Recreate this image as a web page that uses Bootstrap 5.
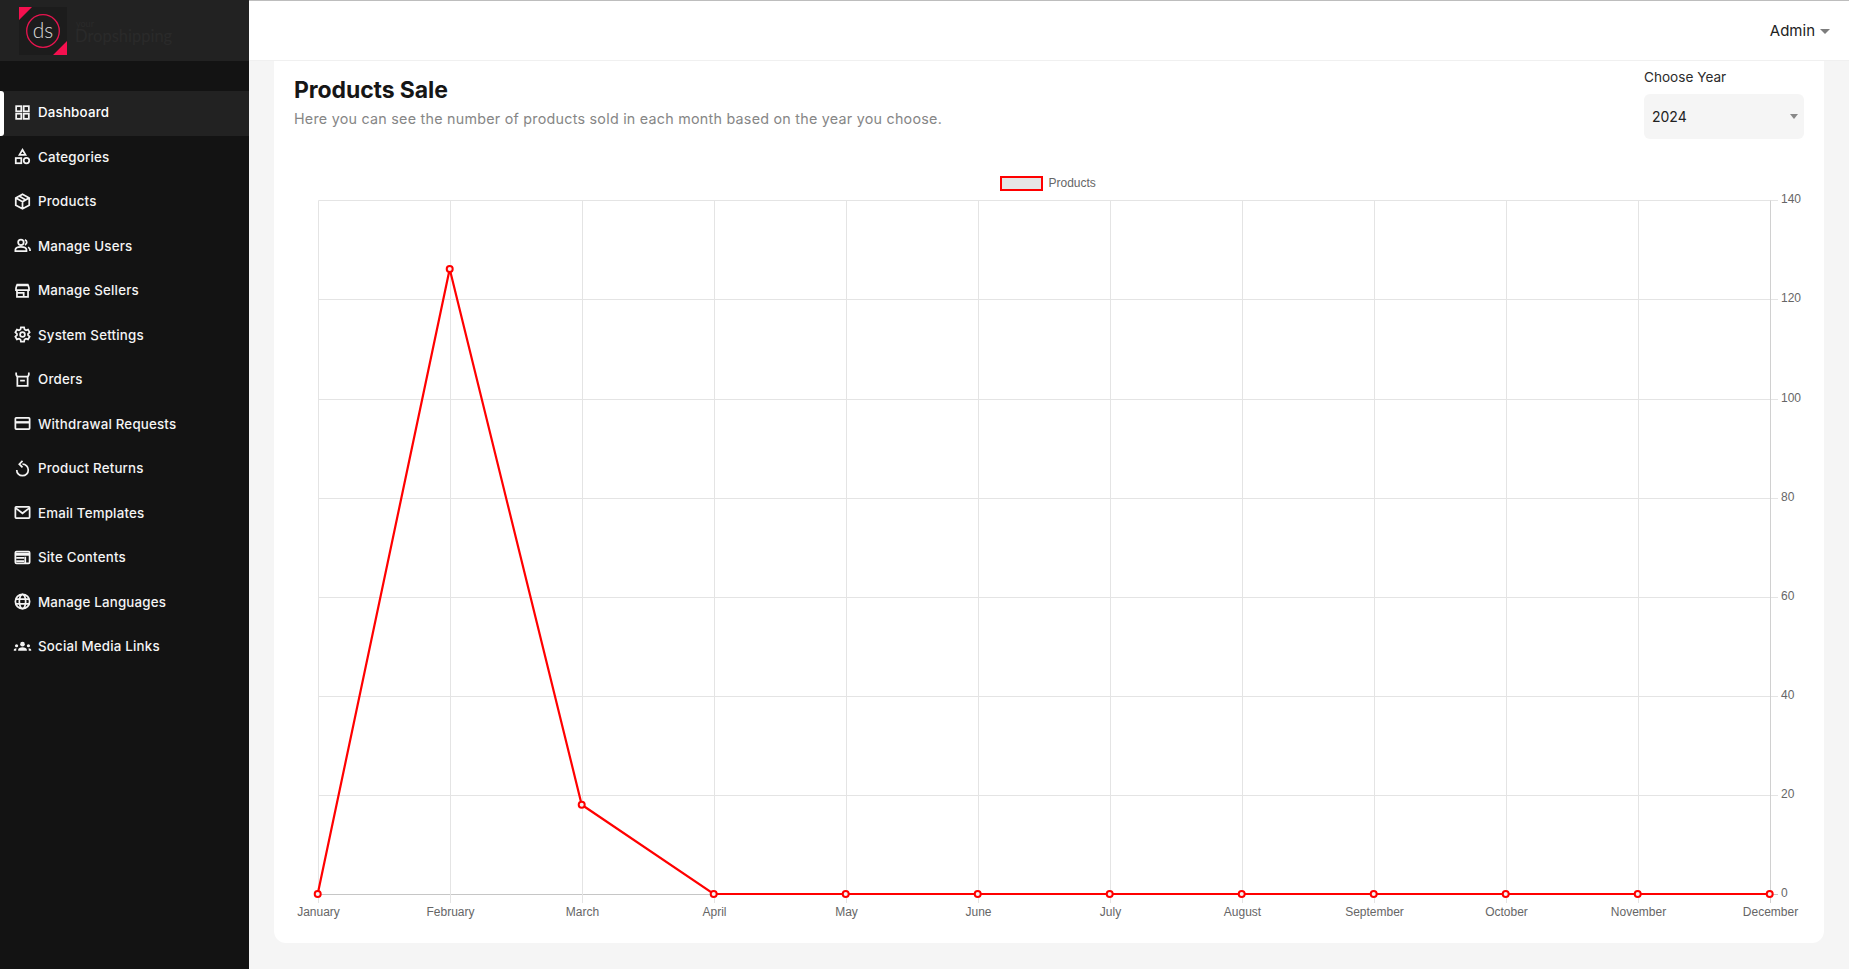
<!DOCTYPE html>
<html lang="en">
<head>
<meta charset="utf-8">
<title>Products Sale</title>
<link href="https://cdn.jsdelivr.net/npm/bootstrap@5.3.0/dist/css/bootstrap.min.css" rel="stylesheet">
<style>
html,body{height:100%;overflow:hidden}
body{font-family:"Inter","Noto Sans",sans-serif;background:#f5f5f5;color:#222}
.side-panel{width:249px;background:#131313;flex:none}
.side-brand{height:61px;background:#222;padding:7px 0 0 19px}
.side-brand svg{display:block}
.side-nav{padding-top:30px}
.side-link{height:44.5px;padding:0 0 0 13px;color:#f5f5f5;font-size:13.3px;font-weight:500;letter-spacing:.2px;display:flex;align-items:center;gap:6px;position:relative}
.side-link:hover,.side-link:focus{color:#fff}
.side-link svg{width:19px;height:19px;flex:none;fill:none;stroke:#f4f4f4;stroke-width:2.2;margin-top:-2px}
.side-link.is-on{background:#222;color:#fff}
.side-link.is-on::before{content:"";position:absolute;left:0;top:0;bottom:0;width:4px;background:#fff;border-radius:0 3px 3px 0}
.top-strip{height:61px;background:#fff;border-top:1px solid #bdbdbd;border-bottom:1px solid #f0f0f0;padding:2px 19px 0 0;flex:none}
.admin-link{font-size:15px;color:#222;text-decoration:none;padding:0;border:0;background:none}
.admin-link::after{content:"";display:inline-block;margin-left:5px;vertical-align:2px;border-left:5px solid transparent;border-right:5px solid transparent;border-top:5.5px solid #7d7d7d}
.main-pane{padding:0 25px 26px}
.sale-panel{background:#fff;border-radius:0 0 12px 12px}
.panel-head{height:84px;padding:0 20px}
.sale-title{font-size:23px;font-weight:700;color:#161616;margin:15px 0 0;line-height:28px;letter-spacing:-.1px}
.sale-sub{font-size:14.3px;color:#868686;margin:5px 0 0;line-height:20px;letter-spacing:.25px}
.year-box{width:160px;padding-top:6px}
.year-label{font-size:13.6px;color:#2b2b2b;line-height:20px;margin:0 0 7px;display:block}
.year-select{height:45px;background-color:#f5f5f5;border:0;border-radius:6px;padding:0 8px;font-size:14px;color:#222;background-size:8px 5px;background-position:right 6px center;background-image:url("data:image/svg+xml,%3csvg xmlns='http://www.w3.org/2000/svg' viewBox='0 0 8 5'%3e%3cpath fill='%23888' d='M0 0h8L4 5z'/%3e%3c/svg%3e")}
.chart-canvas{display:block;width:1550px;height:798px}
.chart-canvas text{font-family:"Liberation Sans",Arial,sans-serif;font-size:12px;fill:#666}
</style>
</head>
<body>
<div class="d-flex vh-100">
  <aside class="side-panel d-flex flex-column">
    <div class="side-brand">
      <svg width="170" height="48" viewBox="0 0 170 48">
        <rect width="48" height="48" fill="#1c1c1c"/>
        <path d="M0 0h13L0 13zM48 48H34L48 34z" fill="#f5104f"/>
        <circle cx="24" cy="24" r="16.3" fill="none" stroke="#e8144f" stroke-width="1.3"/>
        <text x="24" y="30.5" text-anchor="middle" font-family="Lato,sans-serif" font-weight="300" font-size="21" fill="#d8d8d8">ds</text>
        <text x="57" y="20" font-family="Lato,sans-serif" font-size="9" fill="#2a2a2a">your</text>
        <text x="56" y="35" font-family="Lato,sans-serif" font-size="16.5" fill="#2a2a2a">Dropshipping</text>
      </svg>
    </div>
    <nav class="nav flex-column side-nav">
      <a class="nav-link side-link is-on" href="#"><svg viewBox="0 0 24 24"><rect x="4" y="4" width="6.5" height="6.5"/><rect x="13.5" y="4" width="6.5" height="6.5"/><rect x="4" y="13.5" width="6.5" height="6.5"/><rect x="13.5" y="13.5" width="6.5" height="6.5"/></svg>Dashboard</a>
      <a class="nav-link side-link" href="#"><svg viewBox="0 0 24 24"><path d="M12 3.500l3.800 6.500H8.200z"/><rect x="3.500" y="14" width="7" height="6.500"/><circle cx="17" cy="17.200" r="3.500"/></svg>Categories</a>
      <a class="nav-link side-link" href="#"><svg viewBox="0 0 24 24"><path d="M12 2.800l8.500 4.800v9L12 21.200l-8.500-4.600v-9zM3.800 7.600l8.200 4.600 8.200-4.600M12 12.200v9M7.800 5.200l8.300 4.800"/></svg>Products</a>
      <a class="nav-link side-link" href="#"><svg viewBox="0 0 24 24"><circle cx="10" cy="8" r="3.500"/><path d="M3 19v-1.500C3 15 6 13.800 10 13.800s7 1.200 7 3.700V19zM15 4.700a3.500 3.500 0 0 1 0 6.600M19 14.200c1.500.7 2.500 1.800 2.500 3.300V19"/></svg>Manage Users</a>
      <a class="nav-link side-link" href="#"><svg viewBox="0 0 24 24"><path d="M4.500 4.500h15M3.800 9l1-3.500h14.400l1 3.500v2.500H3.800zM5 11.500V20h14v-8.500M5 15h8.500v5"/></svg>Manage Sellers</a>
      <a class="nav-link side-link" href="#"><svg viewBox="0 0 24 24"><circle cx="12" cy="12" r="3"/><path d="M10 3h4l.6 2.700 1.800 1 2.600-.9 2 3.400-2 1.900v1.800l2 1.900-2 3.400-2.600-.9-1.800 1-.6 2.700h-4l-.6-2.700-1.800-1-2.600.9-2-3.400 2-1.900v-1.800l-2-1.900 2-3.400 2.600.9 1.800-1z"/></svg>System Settings</a>
      <a class="nav-link side-link" href="#"><svg viewBox="0 0 24 24"><path d="M4 3v3l1.500 3v11h13V9L20 6V3M5.500 8.500h13M9 13.500h6"/></svg>Orders</a>
      <a class="nav-link side-link" href="#"><svg viewBox="0 0 24 24"><rect x="3" y="5" width="18" height="14" rx="1"/><path d="M3 10.500h18" stroke-width="3"/></svg>Withdrawal Requests</a>
      <a class="nav-link side-link" href="#"><svg viewBox="0 0 24 24"><path d="M12 6.500a7.300 7.300 0 1 1-7.300 7.300M12 2.500l-4 4 4 4"/></svg>Product Returns</a>
      <a class="nav-link side-link" href="#"><svg viewBox="0 0 24 24"><rect x="3" y="5" width="18" height="14" rx="1"/><path d="M3.500 6.500L12 13l8.500-6.500"/></svg>Email Templates</a>
      <a class="nav-link side-link" href="#"><svg viewBox="0 0 24 24"><rect x="3" y="4.500" width="18" height="15" rx="1.500"/><path d="M3 8h18" stroke-width="3.500"/><path d="M4 12.500h10M4 16.500h10M15.500 11v8"/></svg>Site Contents</a>
      <a class="nav-link side-link" href="#"><svg viewBox="0 0 24 24"><circle cx="12" cy="12" r="9"/><ellipse cx="12" cy="12" rx="4" ry="9"/><path d="M3.500 9h17M3.500 15h17"/></svg>Manage Languages</a>
      <a class="nav-link side-link" href="#"><svg viewBox="0 0 24 24" style="fill:#f4f4f4;stroke:none"><circle cx="12" cy="9" r="2.900"/><circle cx="4.500" cy="11" r="2"/><circle cx="19.500" cy="11" r="2"/><path d="M6.500 17.500v-1.300c0-2 2.500-3.200 5.500-3.200s5.500 1.200 5.500 3.200v1.300zM1 17.500v-1.200c0-1.300 1.300-2.100 3.500-2.200-.3.500-.4 1.200-.4 3.400zM23 17.500v-1.200c0-1.300-1.300-2.100-3.500-2.200.3.500.4 1.200.4 3.400z"/></svg>Social Media Links</a>
    </nav>
  </aside>
  <div class="flex-grow-1 d-flex flex-column min-w-0">
    <header class="top-strip d-flex align-items-center justify-content-end">
      <button class="admin-link" type="button">Admin</button>
    </header>
    <main class="main-pane flex-grow-1">
      <section class="sale-panel">
        <div class="panel-head d-flex justify-content-between">
          <div>
            <h1 class="sale-title">Products Sale</h1>
            <p class="sale-sub">Here you can see the number of products sold in each month based on the year you choose.</p>
          </div>
          <div class="year-box">
            <label class="year-label" for="yr">Choose Year</label>
            <select class="form-select year-select" id="yr"><option>2024</option></select>
          </div>
        </div>
        <svg class="chart-canvas" id="chart" viewBox="274 145 1550 798" xmlns="http://www.w3.org/2000/svg"></svg>
      </section>
    </main>
  </div>
</div>
<script src="https://cdn.jsdelivr.net/npm/bootstrap@5.3.0/dist/js/bootstrap.bundle.min.js"></script>
<script>
const months=["January","February","March","April","May","June","July","August","September","October","November","December"];
const data=[0,126,18,0,0,0,0,0,0,0,0,0];
let s='<rect x="1001" y="177" width="41" height="13" fill="#e6e6e6" stroke="#f00" stroke-width="2"/><text x="1048.500" y="187">Products</text>';
const X=i=>318.5+132*i, Y0=894.5, U=99.2;
for(let i=0;i<=7;i++){const y=i==0?Y0:Math.round(Y0-U*i)+.5;
  s+=`<path d="M318.500 ${y}H1778" stroke="${i==0?'#c6c6c6':'#e4e4e4'}" fill="none"/>`;
  s+=`<text x="1781" y="${y+(i==0?2.500:2)}">${i*20}</text>`;}
months.forEach((m,i)=>{const x=X(i);
  s+=`<path d="M${x} 200.500V903" stroke="${i==11?'#d0d0d0':'#e4e4e4'}" fill="none"/>`;
  s+=`<text x="${x}" y="916" text-anchor="middle">${m}</text>`;});
const pts=data.map((v,i)=>[317.7+132*i,894-v*4.96]);
s+=`<polyline points="${pts.map(p=>p.join(',')).join(' ')}" fill="none" stroke="#f00" stroke-width="2.200"/>`;
pts.forEach(p=>{s+=`<circle cx="${p[0]}" cy="${p[1]}" r="3" fill="#f3f3f3" stroke="#f00" stroke-width="2"/>`;});
document.getElementById('chart').innerHTML=s;
</script>
</body>
</html>
